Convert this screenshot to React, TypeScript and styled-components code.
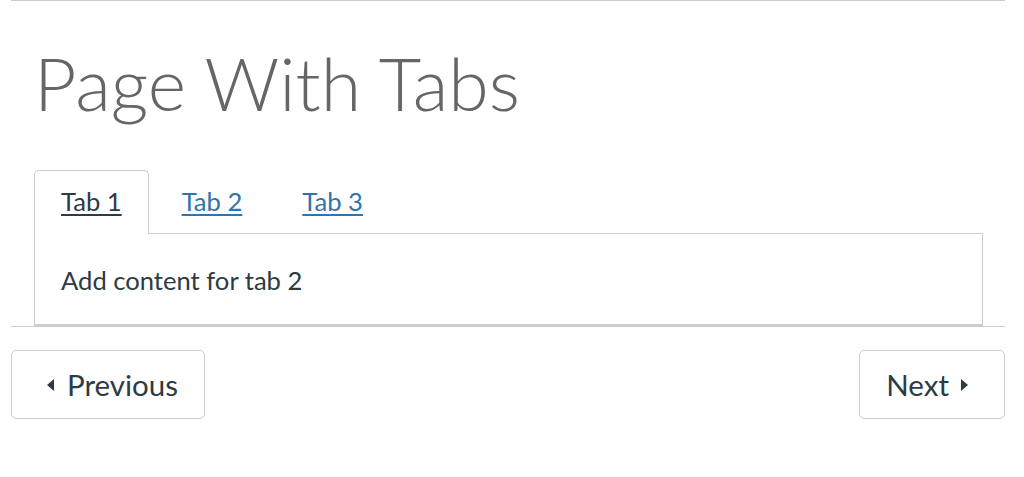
import React from "react";
import styled, { createGlobalStyle } from "styled-components";

const GlobalStyle = createGlobalStyle`
    body {
        margin: 0;
        background: #ffffff;
        font-family: Lato, "Liberation Sans", sans-serif;
        color: #2d3b45;
    }
`;

const Page = styled.div`
    width: 994px;
    margin-left: 11px;
    border-top: 1px solid #c7cdd1;
`;

const Title = styled.h1`
    margin: 37px 0 0 23px;
    font-size: 73.5px;
    font-weight: 300;
    line-height: 89px;
    color: #666666;
`;

const Tabs = styled.div`
    margin: 43px 22px 0 23px;
`;

const TabList = styled.ul`
    display: flex;
    gap: 6px;
    margin: 0;
    padding: 0;
    list-style: none;
`;

const Tab = styled.li<{ $active?: boolean }>`
    position: relative;
    margin-bottom: ${(p) => (p.$active ? "-1px" : "0")};
    padding: 13px 26px 0 26px;
    height: ${(p) => (p.$active ? "50px" : "49px")};
    border: 1px solid ${(p) => (p.$active ? "#c7cdd1" : "transparent")};
    border-bottom: none;
    border-radius: 5px 5px 0 0;
    background: ${(p) => (p.$active ? "#ffffff" : "transparent")};
    font-size: 25.6px;
    line-height: 34px;

    a {
        color: ${(p) => (p.$active ? "#2d3b45" : "#2e74ad")};
        text-decoration: underline;
        text-underline-offset: 3px;
    }
`;

const TabPanel = styled.div`
    padding: 29px 26px 0 26px;
    height: 61px;
    border: 1px solid #c7cdd1;
    border-bottom-width: 2px;
    font-size: 25.6px;
    line-height: 34px;
`;

const Footer = styled.div`
    display: flex;
    justify-content: space-between;
    padding-top: 23px;
    border-top: 1px solid #c7cdd1;
`;

const NavButton = styled.button`
    display: flex;
    align-items: center;
    height: 69px;
    padding: 0 26px;
    border: 1px solid #c7cdd1;
    border-radius: 5px;
    background: #ffffff;
    color: #2d3b45;
    font-family: Lato, "Liberation Sans", sans-serif;
    font-size: 29.5px;
    cursor: pointer;
`;

const Arrow = styled.svg<{ $side: "left" | "right" }>`
    fill: #2d3b45;
    margin: ${(p) => (p.$side === "left" ? "0 13px 0 9px" : "0 10px 0 12px")};
`;

const ArrowLeft = () => (
    <Arrow $side="left" width="7" height="12" viewBox="0 0 7 12">
        <path d="M7 0 L0 6 L7 12 Z" />
    </Arrow>
);

const ArrowRight = () => (
    <Arrow $side="right" width="7" height="12" viewBox="0 0 7 12">
        <path d="M0 0 L7 6 L0 12 Z" />
    </Arrow>
);

const App: React.FC = () => {
    const tabs = ["Tab 1", "Tab 2", "Tab 3"];

    return (
        <>
            <GlobalStyle />
            <Page>
                <Title>Page With Tabs</Title>
                <Tabs>
                    <TabList>
                        {tabs.map((t, i) => (
                            <Tab key={t} $active={i === 0}>
                                <a href="#">{t}</a>
                            </Tab>
                        ))}
                    </TabList>
                    <TabPanel>Add content for tab 2</TabPanel>
                </Tabs>
                <Footer>
                    <NavButton>
                        <ArrowLeft />
                        Previous
                    </NavButton>
                    <NavButton>
                        Next
                        <ArrowRight />
                    </NavButton>
                </Footer>
            </Page>
        </>
    );
};

export default App;
